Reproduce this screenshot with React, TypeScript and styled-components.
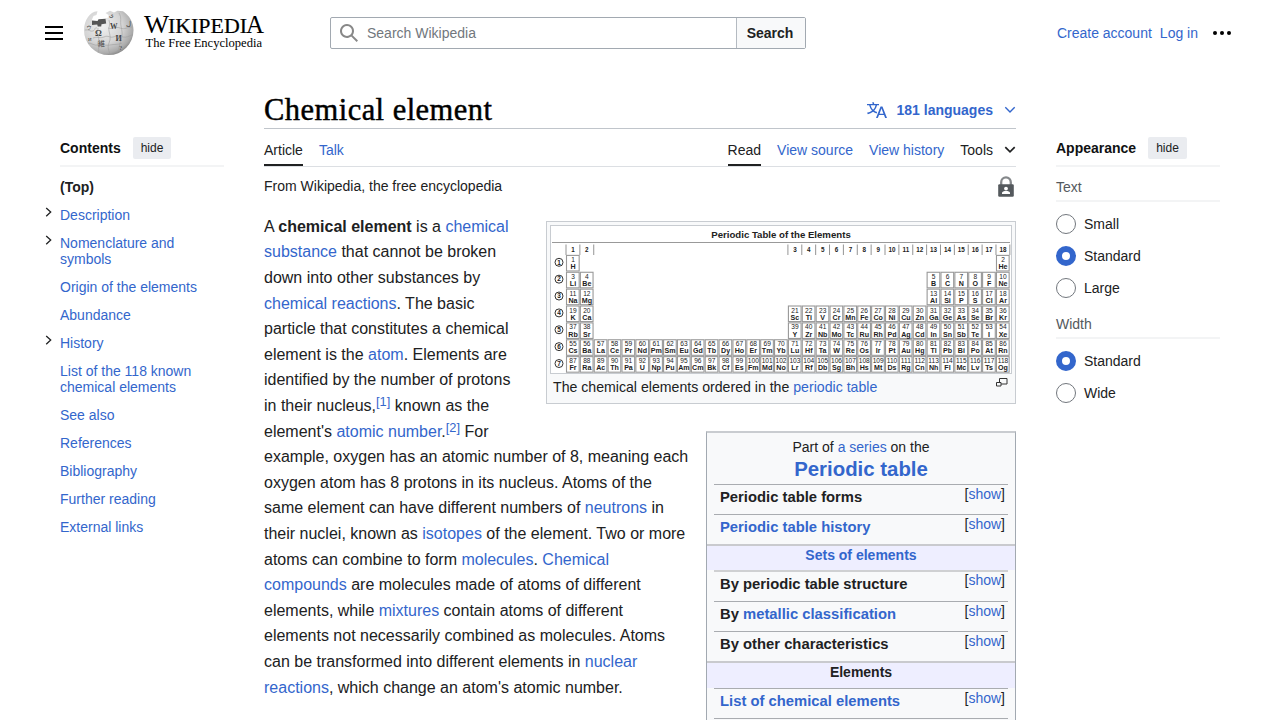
import React from "react";
import styled, { createGlobalStyle } from "styled-components";

const Global = createGlobalStyle`
  * { box-sizing: border-box; }
  body {
    margin: 0;
    background: #fff;
    color: #202122;
    font-family: "Liberation Sans", Arial, sans-serif;
    font-size: 14px;
  }
`;

const Page = styled.div`
  height: 720px;
  overflow: hidden;
`;

const Link = styled.a`
  color: #3366cc;
  text-decoration: none;
`;

/* ---------- header ---------- */

const Header = styled.header`
  display: flex;
  align-items: center;
  height: 66px;
  padding: 0 48px 0 44px;
`;

const MenuButton = styled.button`
  display: flex;
  width: 20px;
  height: 20px;
  padding: 0;
  border: 0;
  background: none;
`;

const Brand = styled.a`
  display: flex;
  margin-left: 18px;
  width: 248px;
`;

const SearchForm = styled.form`
  display: flex;
  width: 476px;
  height: 32px;
  border: 1px solid #a2a9b1;
  border-radius: 2px;
`;

const SearchField = styled.label`
  display: flex;
  flex: 1;
  align-items: center;
  gap: 8px;
  padding-left: 8px;
  color: #72777d;
`;

const SearchButton = styled.button`
  width: 69px;
  padding: 0 2px 0 0;
  border: 0;
  border-left: 1px solid #b4bac1;
  background: #f8f9fa;
  color: #202122;
  font: bold 14px "Liberation Sans", Arial, sans-serif;
`;

const UserLinks = styled.nav`
  display: flex;
  align-items: center;
  gap: 8px;
  margin-left: auto;
`;

const MoreIcon = styled.svg`
  margin-left: 6px;
`;

/* ---------- columns ---------- */

const Columns = styled.div`
  display: grid;
  grid-template-columns: 180px 752px 164px;
  column-gap: 40px;
  padding-left: 44px;
`;

const SidePanel = styled.aside<{ $inset?: number }>`
  padding-top: 65px;
  padding-left: ${(p) => p.$inset ?? 0}px;
`;

const PanelHead = styled.div`
  display: flex;
  align-items: center;
  gap: 12px;
  height: 36px;
  border-bottom: 2px solid #f3f4f5;
  color: #101112;
  font-weight: bold;
`;

const HideButton = styled.button`
  height: 22px;
  padding: 0 8px;
  border: 0;
  border-radius: 2px;
  background: #eaecf0;
  color: #202122;
  font: 12px "Liberation Sans", Arial, sans-serif;
`;

const TocList = styled.ul`
  margin: 6px 0 0;
  padding: 0;
  list-style: none;
`;

const TocItem = styled.li<{ $current?: boolean }>`
  display: flex;
  margin-left: -16px;
  padding: 6px 0;
  line-height: 16px;
  font-weight: ${(p) => (p.$current ? "bold" : "normal")};
`;

const TocToggle = styled.span`
  display: flex;
  flex: none;
  width: 16px;
  height: 10px;
`;

const TocLabel = styled.span`
  width: 150px;
`;

const GroupLabel = styled.div`
  display: flex;
  align-items: center;
  height: 35px;
  padding-top: 7px;
  border-bottom: 2px solid #f3f4f5;
  color: #54595d;
`;

const RadioGroup = styled.div`
  padding-top: 6px;
`;

const RadioRow = styled.label`
  display: flex;
  align-items: center;
  gap: 8px;
  height: 32px;
`;

const RadioDot = styled.span<{ $on?: boolean }>`
  width: 20px;
  height: 20px;
  border: ${(p) => (p.$on ? "6px solid #3366cc" : "1px solid #72777d")};
  border-radius: 50%;
  background: #fff;
`;

/* ---------- article ---------- */

const Main = styled.main`
  padding-top: 24px;
`;

const TitleRow = styled.div`
  display: flex;
  align-items: center;
  justify-content: space-between;
  height: 39px;
  border-bottom: 1px solid #c0c5cb;
`;

const Title = styled.h1`
  margin: 3px 0 0;
  color: #000;
  font: normal 30.5px "Liberation Serif", Georgia, serif;
  letter-spacing: 0.46px;
  -webkit-text-stroke: 0.45px #000;
`;

const LanguageButton = styled.a`
  display: flex;
  align-items: center;
  margin-top: 1px;
  color: #3366cc;
  font-weight: bold;
`;

const LanguageText = styled.span`
  margin: 0 11px 0 10px;
`;

const TabBar = styled.nav`
  display: flex;
  gap: 16px;
  height: 38px;
  border-bottom: 1px solid #dcdfe3;
`;

const Tab = styled.a<{ $active?: boolean; $end?: boolean }>`
  display: flex;
  align-items: center;
  gap: 11px;
  height: 37px;
  padding-top: 7px;
  margin-left: ${(p) => (p.$end ? "auto" : "0")};
  border-bottom: 2px solid ${(p) => (p.$active ? "#202122" : "transparent")};
  color: ${(p) => (p.$active ? "#202122" : "#3366cc")};
`;

const ToolsTab = styled(Tab)`
  color: #202122;
`;

const SubRow = styled.div`
  display: flex;
  align-items: center;
  justify-content: space-between;
  height: 47px;
  padding: 9px 2px 17px 0;
`;

const SubText = styled.span`
  margin-top: -2px;
`;

const Body = styled.div`
  height: 520px;
`;

const Paragraph = styled.p`
  margin: -0.2px 0 0;
  font-size: 16px;
  line-height: 25.6px;
`;

const Ref = styled.sup`
  font-size: 12.8px;
  line-height: 0;
  vertical-align: 5px;
`;

const Thumb = styled.figure`
  float: right;
  width: 470px;
  height: 183px;
  margin: 7px 0 20px 22px;
  padding: 3px;
  border: 1px solid #c8ccd1;
  background: #f8f9fa;
`;

const ThumbImage = styled.div`
  height: 149px;
  border: 1px solid #c8ccd1;
  background: #fff;
  svg { display: block; }
`;

const Caption = styled.figcaption`
  display: flex;
  justify-content: space-between;
  padding: 3px 4px 0 3px;
  font-size: 14.13px;
  line-height: 20px;
`;

const SeriesBox = styled.aside`
  float: right;
  clear: right;
  width: 310px;
  height: 320px;
  margin: 7px 0 0 16px;
  border: 1px solid #a2a9b1;
  border-top: 2px solid #c9ccd0;
  background: #f8f9fa;
`;

const SeriesIntro = styled.div`
  height: 51px;
  padding-top: 5px;
  text-align: center;
  line-height: 18px;
`;

const SeriesTitle = styled.div`
  font-size: 20.4px;
  font-weight: bold;
  line-height: 26px;
`;

const SeriesRow = styled.div<{ $height: number; $strong?: boolean }>`
  display: flex;
  justify-content: space-between;
  height: ${(p) => p.$height}px;
  margin: 0 7px;
  padding: 0 3px 0 6px;
  border-top: ${(p) => (p.$strong ? "2px solid #cfd0d2" : "1px solid #a9acb0")};
`;

const SeriesHeading = styled.span`
  padding-top: 4px;
  font-size: 14.8px;
  font-weight: bold;
  line-height: 17px;
`;

const ShowToggle = styled.span<{ $raised?: boolean }>`
  padding-top: ${(p) => (p.$raised ? 0 : 1)}px;
  line-height: 16px;
`;

const SeriesBand = styled.div<{ $height: number }>`
  height: ${(p) => p.$height}px;
  border-top: 2px solid #c9cace;
  background: #eeeeff;
  text-align: center;
  font-weight: bold;
  line-height: 19px;
`;

/* ---------- periodic table drawing ---------- */

const LEFT = 15;
const PITCH_X = 13.87;
const PITCH_Y = 16.87;
const TOP = 28.9;

const SYMBOLS =
  "H He Li Be B C N O F Ne Na Mg Al Si P S Cl Ar K Ca Sc Ti V Cr Mn Fe Co Ni Cu Zn Ga Ge As Se Br Kr Rb Sr Y Zr Nb Mo Tc Ru Rh Pd Ag Cd In Sn Sb Te I Xe Cs Ba La Ce Pr Nd Pm Sm Eu Gd Tb Dy Ho Er Tm Yb Lu Hf Ta W Re Os Ir Pt Au Hg Tl Pb Bi Po At Rn Fr Ra Ac Th Pa U Np Pu Am Cm Bk Cf Es Fm Md No Lr Rf Db Sg Bh Hs Mt Ds Rg Cn Nh Fl Mc Lv Ts Og".split(
    " "
  );

/* Each period fills the columns on the left first, then the rightmost ones. */
const PERIODS = [
  { first: 1, left: 1, count: 2 },
  { first: 3, left: 2, count: 8 },
  { first: 11, left: 2, count: 8 },
  { first: 19, left: 2, count: 18 },
  { first: 37, left: 2, count: 18 },
  { first: 55, left: 2, count: 32 },
  { first: 87, left: 2, count: 32 },
];

const CELLS = PERIODS.flatMap((period, row) =>
  Array.from({ length: period.count }, (_, i) => ({
    number: period.first + i,
    row,
    col: i < period.left ? i : 32 - period.count + i,
  }))
);

const columnX = (col: number) => LEFT + col * PITCH_X;

function PeriodicTable() {
  return (
    <svg
      width="460"
      height="147"
      fontFamily="Liberation Sans, Arial, sans-serif"
      textAnchor="middle"
      fill="#222"
    >
      <text
        x="230"
        y="12.2"
        fontSize="9.8"
        fontWeight="bold"
        textLength="139.5"
        lengthAdjust="spacingAndGlyphs"
      >
        Periodic Table of the Elements
      </text>
      <path d="M1 16.5H459" stroke="#999" />
      {Array.from({ length: 18 }, (_, g) => {
        const x = columnX(g < 2 ? g : g + 14);
        return (
          <g key={g}>
            <path d={`M${x} 18.5V29`} stroke="#888" strokeWidth="0.9" />
            <text x={x + 7} y="26.2" fontSize="6.3" fontWeight="bold">
              {g + 1}
            </text>
          </g>
        );
      })}
      <path
        d={`M${columnX(2)} 18.5V29M${columnX(32)} 18.5V29`}
        stroke="#888"
        strokeWidth="0.9"
      />
      {PERIODS.map((period, row) => {
        const y = TOP + row * PITCH_Y + 7.4;
        return (
          <g key={period.first}>
            <circle cx="8" cy={y} r="4" fill="none" stroke="#333" strokeWidth="1" />
            <text x="8" y={y + 2.3} fontSize="6.5" fontWeight="bold">
              {row + 1}
            </text>
          </g>
        );
      })}
      {CELLS.map(({ number, row, col }) => {
        const x = columnX(col);
        const y = TOP + row * PITCH_Y;
        return (
          <g key={number}>
            <rect
              x={x + 0.5}
              y={y + 0.5}
              width={PITCH_X - 1.2}
              height={PITCH_Y - 1.3}
              fill="#fff"
              stroke="#999"
              strokeWidth="1.1"
            />
            <text x={x + 7} y={y + 7} fontSize="6.6">
              {number}
            </text>
            <text x={x + 7} y={y + 14.2} fontSize="7.1" fontWeight="bold">
              {SYMBOLS[number - 1]}
            </text>
          </g>
        );
      })}
    </svg>
  );
}

/* ---------- icons ---------- */

function Logo() {
  return (
    <svg width="184" height="50" viewBox="82 8 184 50">
      <defs>
        <radialGradient id="globe" cx="0.38" cy="0.35" r="0.72">
          <stop offset="0" stopColor="#f0f0f0" />
          <stop offset="0.55" stopColor="#d4d4d4" />
          <stop offset="0.85" stopColor="#aaa" />
          <stop offset="1" stopColor="#777" />
        </radialGradient>
      </defs>
      <path
        d="M88 17C90.500 13.500 93 11.600 97.500 11.300L96.500 15 93.500 16 92 19.500 92 23 106 22 105 18.500 108.500 17.500 108.500 15 105.500 13 110 10.800 114 12.500 117.500 10.800 123 11.300C129.500 15.500 133.500 22.500 133.500 30.300A24.700 24.700 0 0 1 84 30.300C84 25 85.500 20.500 88 17Z"
        fill="url(#globe)"
      />
      <path
        d="M92 20.500l5.500.5 1-1.700 7-.6.7 4.800-4.700.8-.3 2.200h-3.400l-.6-2-5.200.4z"
        fill="#555"
      />
      <path
        d="M85 30c4-1 5 2 8 1s1-4 4-3M98 28c0 4-2 5 0 8s-1 6 0 9 1 6 0 8M93 38c4-2 7 1 11-1s6 1 9 0 7-1 10 0 6-1 9-2M109 20c2 5-1 7 0 11s2 8 0 12 0 8 1 11M108 28c5 2 7-2 12 0s7-1 12-1M119 13c3 5 1 8 2 13s2 9 0 14-1 8-4 12M88 43c4 0 6 3 10 2s8 1 12 0 8 0 12-2"
        fill="none"
        stroke="#a0a0a0"
        strokeWidth="0.6"
      />
      <g fill="#444" fontFamily="Liberation Serif, serif">
        <text x="95" y="36" fontSize="8.500" fontWeight="bold">Ω</text>
        <text x="110" y="28.500" fontSize="7.500" fontWeight="bold">W</text>
        <text x="115.500" y="40.500" fontSize="8" fontWeight="bold">И</text>
        <text x="98" y="46" fontSize="7" fontFamily="Noto Sans CJK JP, sans-serif">維</text>
        <text x="119" y="49.500" fontSize="7">?</text>
        <text x="126" y="26" fontSize="7">ل</text>
        <text x="108.500" y="17" fontSize="6">ي</text>
        <text x="86.500" y="29" fontSize="5" fontFamily="Noto Sans CJK JP, sans-serif">ウ</text>
        <text x="88" y="41" fontSize="5">Й</text>
      </g>
      <g fill="#000" fontFamily="Liberation Serif, serif">
        <text x="144" y="32.500" fontSize="26" textLength="25" lengthAdjust="spacingAndGlyphs">W</text>
        <text x="168" y="32.500" fontSize="20" textLength="79" lengthAdjust="spacingAndGlyphs" stroke="#000" strokeWidth="0.2">
          IKIPEDI
        </text>
        <text x="246" y="32.500" fontSize="26" textLength="18" lengthAdjust="spacingAndGlyphs">A</text>
        <text x="145.500" y="47" fontSize="12.500" textLength="116.500" lengthAdjust="spacingAndGlyphs">
          The Free Encyclopedia
        </text>
      </g>
    </svg>
  );
}

function SearchIcon() {
  return (
    <svg width="20" height="20" viewBox="0 0 20 20" fill="#888">
      <path d="M12.200 13.600a7 7 0 1 1 1.400-1.400l5.400 5.400-1.400 1.400zM3 8a5 5 0 1 0 10 0A5 5 0 0 0 3 8" />
    </svg>
  );
}

function LanguageIcon() {
  return (
    <svg width="20" height="20" viewBox="0 0 20 20" fill="#3366cc">
      <path d="M20 18h-1.440a.6.6 0 0 1-.4-.12.8.8 0 0 1-.23-.31L17 15h-5l-1 2.540a.8.8 0 0 1-.22.3.6.6 0 0 1-.4.140H9l4.550-11.470h1.890zm-3.530-4.310L14.890 9.500a12 12 0 0 1-.39-1.240q-.09.370-.19.690l-.19.560-1.580 4.190zm-6.300-1.580a13.400 13.400 0 0 1-2.910-1.410 11.460 11.460 0 0 0 2.810-5.370H12V4H7.310a4 4 0 0 0-.2-.56C6.870 2.790 6.600 2 6.600 2l-1.470.5s.4.890.6 1.500H0v1.330h2.150A11.230 11.230 0 0 0 5 10.700a17.200 17.200 0 0 1-5 2.100q.56.820.87 1.380a23.300 23.300 0 0 0 5.220-2.510 15.600 15.600 0 0 0 3.560 1.770zM3.630 5.330h4.910a8.100 8.100 0 0 1-2.450 4.450 9.100 9.100 0 0 1-2.460-4.450" />
    </svg>
  );
}

function ChevronDown({ color, weight = 1.4 }: { color: string; weight?: number }) {
  return (
    <svg width="12" height="8" viewBox="0 0 12 8" fill="none" stroke={color} strokeWidth={weight}>
      <path d="M1.300 1.200L6 5.900l4.700-4.700" />
    </svg>
  );
}

function ChevronRight() {
  return (
    <svg width="8" height="10" viewBox="0 0 8 10" fill="none" stroke="#202122" strokeWidth="1.300">
      <path d="M2.200 0.900L6.700 5.100 2.200 9.300" />
    </svg>
  );
}

function LockIcon() {
  return (
    <svg width="16" height="21" viewBox="0 0 16 21">
      <path d="M3.200 10V6.200a4.800 4.800 0 0 1 9.600 0V10" fill="none" stroke="#85888b" strokeWidth="2.300" />
      <rect x="0.200" y="8.300" width="15.600" height="12.400" rx="1.200" fill="#54595d" />
      <circle cx="8" cy="12.600" r="1.900" fill="#fff" />
      <path d="M4 18v-1c0-1.400 2-2 4-2s4 .6 4 2v1z" fill="#fff" />
    </svg>
  );
}

function EnlargeIcon() {
  return (
    <svg width="12" height="11" viewBox="0 0 12 11" fill="#f8f9fa" stroke="#333">
      <path d="M3.500 1.500h7.500v5.500h-7.500z" />
      <path d="M0.500 5.500h4.500v3.500H0.500z" />
    </svg>
  );
}

/* ---------- content ---------- */

const TOC = [
  { label: "Description", open: true },
  { label: "Nomenclature and symbols", open: true },
  { label: "Origin of the elements" },
  { label: "Abundance" },
  { label: "History", open: true },
  { label: "List of the 118 known chemical elements" },
  { label: "See also" },
  { label: "References" },
  { label: "Bibliography" },
  { label: "Further reading" },
  { label: "External links" },
];

function Radio({ label, on }: { label: string; on?: boolean }) {
  return (
    <RadioRow>
      <RadioDot $on={on} />
      {label}
    </RadioRow>
  );
}

function Series({
  height,
  strong,
  children,
}: {
  height: number;
  strong?: boolean;
  children: React.ReactNode;
}) {
  return (
    <SeriesRow $height={height} $strong={strong}>
      <SeriesHeading>{children}</SeriesHeading>
      <ShowToggle $raised={strong}>
        [<Link>show</Link>]
      </ShowToggle>
    </SeriesRow>
  );
}

export default function App() {
  return (
    <Page>
      <Global />
      <Header>
        <MenuButton aria-label="Main menu">
          <svg width="20" height="20" viewBox="0 0 20 20">
            <path d="M1 3h18v2H1zM1 9h18v2H1zM1 15h18v2H1z" />
          </svg>
        </MenuButton>
        <Brand>
          <Logo />
        </Brand>
        <SearchForm>
          <SearchField>
            <SearchIcon />
            Search Wikipedia
          </SearchField>
          <SearchButton type="button">Search</SearchButton>
        </SearchForm>
        <UserLinks>
          <Link>Create account</Link>
          <Link>Log in</Link>
          <MoreIcon width="20" height="20" viewBox="0 0 20 20">
            <circle cx="3" cy="10" r="2" />
            <circle cx="10" cy="10" r="2" />
            <circle cx="17" cy="10" r="2" />
          </MoreIcon>
        </UserLinks>
      </Header>

      <Columns>
        <SidePanel $inset={16}>
          <PanelHead>
            Contents <HideButton>hide</HideButton>
          </PanelHead>
          <TocList>
            <TocItem $current>
              <TocToggle />
              (Top)
            </TocItem>
            {TOC.map((item) => (
              <TocItem key={item.label}>
                <TocToggle>{item.open && <ChevronRight />}</TocToggle>
                <TocLabel>
                  <Link>{item.label}</Link>
                </TocLabel>
              </TocItem>
            ))}
          </TocList>
        </SidePanel>

        <Main>
          <TitleRow>
            <Title>Chemical element</Title>
            <LanguageButton>
              <LanguageIcon />
              <LanguageText>181 languages</LanguageText>
              <ChevronDown color="#3366cc" />
            </LanguageButton>
          </TitleRow>
          <TabBar>
            <Tab $active>Article</Tab>
            <Tab>Talk</Tab>
            <Tab $active $end>
              Read
            </Tab>
            <Tab>View source</Tab>
            <Tab>View history</Tab>
            <ToolsTab>
              Tools <ChevronDown color="#202122" weight={1.7} />
            </ToolsTab>
          </TabBar>
          <SubRow>
            <SubText>From Wikipedia, the free encyclopedia</SubText>
            <LockIcon />
          </SubRow>
          <Body>
            <Thumb>
              <ThumbImage>
                <PeriodicTable />
              </ThumbImage>
              <Caption>
                <span>
                  The chemical elements ordered in the <Link>periodic table</Link>
                </span>
                <EnlargeIcon />
              </Caption>
            </Thumb>
            <SeriesBox>
              <SeriesIntro>
                Part of <Link>a series</Link> on the
                <SeriesTitle>
                  <Link>Periodic table</Link>
                </SeriesTitle>
              </SeriesIntro>
              <Series height={30}>Periodic table forms</Series>
              <Series height={30}>
                <Link>Periodic table history</Link>
              </Series>
              <SeriesBand $height={26}>
                <Link>Sets of elements</Link>
              </SeriesBand>
              <Series height={31} strong>
                By periodic table structure
              </Series>
              <Series height={30}>
                By <Link>metallic classification</Link>
              </Series>
              <Series height={30}>By other characteristics</Series>
              <SeriesBand $height={27}>Elements</SeriesBand>
              <Series height={30}>
                <Link>List of chemical elements</Link>
              </Series>
              <SeriesRow $height={30} />
            </SeriesBox>
            <Paragraph>
              A <b>chemical element</b> is a <Link>chemical substance</Link> that cannot be broken
              down into other substances by <Link>chemical reactions</Link>. The basic particle
              that constitutes a chemical element is the <Link>atom</Link>. Elements are identified
              by the number of protons in their nucleus,
              <Ref>
                <Link>[1]</Link>
              </Ref>{" "}
              known as the element's <Link>atomic number</Link>.
              <Ref>
                <Link>[2]</Link>
              </Ref>{" "}
              For example, oxygen has an atomic number of 8, meaning each oxygen atom has 8 protons
              in its nucleus. Atoms of the same element can have different numbers of{" "}
              <Link>neutrons</Link> in their nuclei, known as <Link>isotopes</Link> of the element.
              Two or more atoms can combine to form <Link>molecules</Link>.{" "}
              <Link>Chemical compounds</Link> are molecules made of atoms of different elements,
              while <Link>mixtures</Link> contain atoms of different elements not necessarily
              combined as molecules. Atoms can be transformed into different elements in{" "}
              <Link>nuclear reactions</Link>, which change an atom's atomic number.
            </Paragraph>
          </Body>
        </Main>

        <SidePanel>
          <PanelHead>
            Appearance <HideButton>hide</HideButton>
          </PanelHead>
          <GroupLabel>Text</GroupLabel>
          <RadioGroup>
            <Radio label="Small" />
            <Radio label="Standard" on />
            <Radio label="Large" />
          </RadioGroup>
          <GroupLabel>Width</GroupLabel>
          <RadioGroup>
            <Radio label="Standard" on />
            <Radio label="Wide" />
          </RadioGroup>
        </SidePanel>
      </Columns>
    </Page>
  );
}
